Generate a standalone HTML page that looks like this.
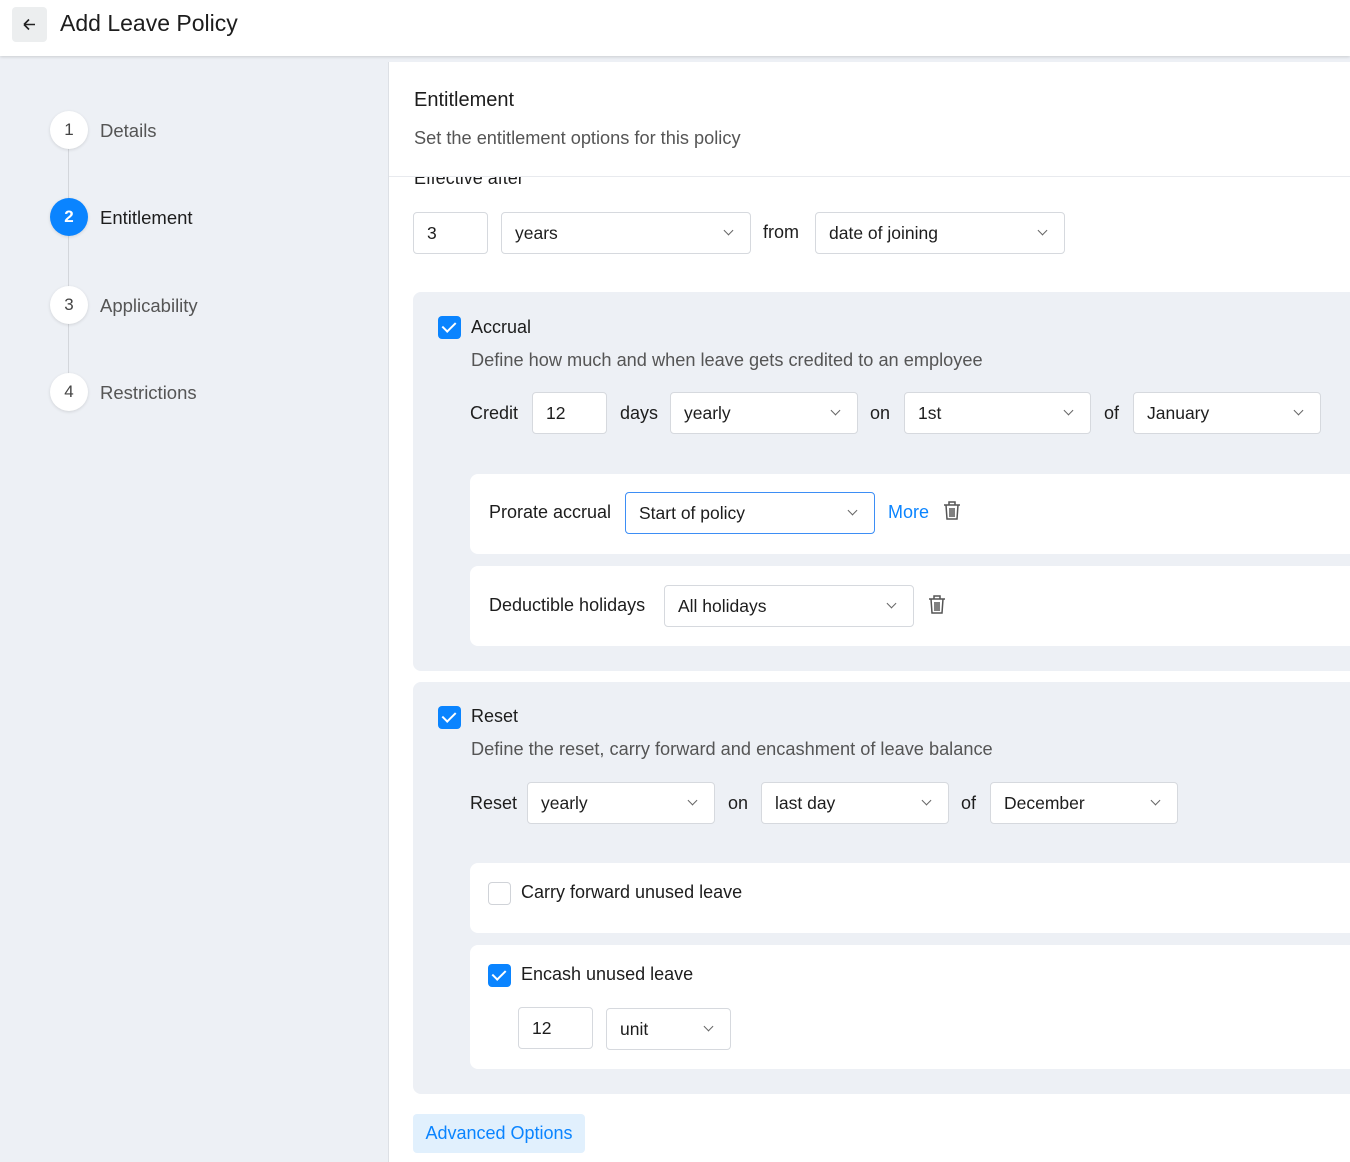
<!DOCTYPE html>
<html><head><meta charset="utf-8"><style>
*{box-sizing:border-box;margin:0;padding:0}
body{width:1350px;height:1162px;overflow:hidden;background:#edf0f5;font-family:"Liberation Sans",sans-serif;color:#1d1d1d;position:relative;font-size:17px}
.a{position:absolute}
.hdr{left:0;top:0;width:1350px;height:56px;background:#fff;box-shadow:0 1px 3px rgba(0,0,0,.15);z-index:3}
.back{left:12px;top:7px;width:35px;height:35px;background:#eceeef;border-radius:4px}
.main{left:388px;top:62px;width:962px;height:1100px;background:#fff;border-left:1px solid #dde0e5}
.step{width:38px;height:38px;border-radius:50%;background:#fff;box-shadow:0 1px 3px rgba(0,0,0,.12);text-align:center;line-height:38px;font-size:17px;color:#444}
.sl{font-size:18.5px;color:#555}
.box{background:#fff;border:1px solid #d6d9de;border-radius:4px;height:42px;line-height:40px;padding-left:13px;font-size:17.5px;color:#1d1d1d}
.chev{position:absolute;right:18px;top:14px;width:7px;height:7px;border-right:1.5px solid #666;border-bottom:1.5px solid #666;transform:rotate(45deg)}
.card{background:#edf0f5;border-radius:8px}
.wc{background:#fff;border-radius:8px}
.cb{width:23px;height:23px;border-radius:4px;background:#0a84ff}
.cb:after{content:"";position:absolute;left:7px;top:3px;width:6px;height:11px;border-right:2px solid #fff;border-bottom:2px solid #fff;transform:rotate(45deg)}
.lbl{font-size:18px;color:#1d1d1d}
.gray{color:#555;font-size:18.2px}
</style></head><body>
<div class="a hdr">
 <div class="a back"><svg width="35" height="35" viewBox="0 0 35 35"><path d="M12 17.5h11M12 17.5l5-5M12 17.5l5 5" stroke="#222" stroke-width="1.6" fill="none"/></svg></div>
 <div class="a" style="left:60px;top:10px;font-size:23px;color:#1d1d1d">Add Leave Policy</div>
</div>
<div class="a" style="left:68px;top:140px;width:1px;height:250px;background:#d3d6db"></div>
<div class="a step" style="left:50px;top:111px">1</div><div class="a sl" style="left:100px;top:120px">Details</div>
<div class="a step" style="left:50px;top:198px;background:#0a84ff;color:#fff;font-weight:bold">2</div><div class="a sl" style="left:100px;top:207px;color:#1d1d1d">Entitlement</div>
<div class="a step" style="left:50px;top:286px">3</div><div class="a sl" style="left:100px;top:295px">Applicability</div>
<div class="a step" style="left:50px;top:373px">4</div><div class="a sl" style="left:100px;top:382px">Restrictions</div>

<div class="a main"></div>
<div class="a" style="left:414px;top:89px;font-size:20px">Entitlement</div>
<div class="a gray" style="left:414px;top:128px">Set the entitlement options for this policy</div>
<div class="a" style="left:389px;top:176px;width:961px;height:1px;background:#e8eaee"></div>
<div class="a" style="left:414px;top:177px;height:11px;overflow:hidden;width:200px"><div style="margin-top:-9px;font-size:18px">Effective after</div></div>

<div class="a box" style="left:413px;top:212px;width:75px">3</div>
<div class="a box" style="left:501px;top:212px;width:250px">years<span class="chev"></span></div>
<div class="a lbl" style="left:763px;top:222px">from</div>
<div class="a box" style="left:815px;top:212px;width:250px">date of joining<span class="chev"></span></div>

<div class="a card" style="left:413px;top:292px;width:960px;height:379px"></div>
<div class="a cb" style="left:438px;top:316px"></div>
<div class="a lbl" style="left:471px;top:317px">Accrual</div>
<div class="a gray" style="left:471px;top:350px">Define how much and when leave gets credited to an employee</div>
<div class="a lbl" style="left:470px;top:403px">Credit</div>
<div class="a box" style="left:532px;top:392px;width:75px">12</div>
<div class="a lbl" style="left:620px;top:403px">days</div>
<div class="a box" style="left:670px;top:392px;width:188px">yearly<span class="chev"></span></div>
<div class="a lbl" style="left:870px;top:403px">on</div>
<div class="a box" style="left:904px;top:392px;width:187px">1st<span class="chev"></span></div>
<div class="a lbl" style="left:1104px;top:403px">of</div>
<div class="a box" style="left:1133px;top:392px;width:188px">January<span class="chev"></span></div>

<div class="a wc" style="left:470px;top:474px;width:900px;height:80px"></div>
<div class="a lbl" style="left:489px;top:502px">Prorate accrual</div>
<div class="a box" style="left:625px;top:492px;width:250px;border-color:#3d8ef5">Start of policy<span class="chev"></span></div>
<div class="a" style="left:888px;top:502px;font-size:18px;color:#0a84ff">More</div>
<svg class="a" style="left:942px;top:500px" width="20" height="22" viewBox="0 0 20 22"><path d="M2 5h16M7 5V2h6v3M4 5l1 14h10l1-14M8 8v9M12 8v9M10 8v9" stroke="#555" stroke-width="1.5" fill="none"/></svg>

<div class="a wc" style="left:470px;top:566px;width:900px;height:80px"></div>
<div class="a lbl" style="left:489px;top:595px">Deductible holidays</div>
<div class="a box" style="left:664px;top:585px;width:250px">All holidays<span class="chev"></span></div>
<svg class="a" style="left:927px;top:594px" width="20" height="22" viewBox="0 0 20 22"><path d="M2 5h16M7 5V2h6v3M4 5l1 14h10l1-14M8 8v9M12 8v9M10 8v9" stroke="#555" stroke-width="1.5" fill="none"/></svg>

<div class="a card" style="left:413px;top:682px;width:960px;height:412px"></div>
<div class="a cb" style="left:438px;top:706px"></div>
<div class="a lbl" style="left:471px;top:706px">Reset</div>
<div class="a gray" style="left:471px;top:739px">Define the reset, carry forward and encashment of leave balance</div>
<div class="a lbl" style="left:470px;top:793px">Reset</div>
<div class="a box" style="left:527px;top:782px;width:188px">yearly<span class="chev"></span></div>
<div class="a lbl" style="left:728px;top:793px">on</div>
<div class="a box" style="left:761px;top:782px;width:188px">last day<span class="chev"></span></div>
<div class="a lbl" style="left:961px;top:793px">of</div>
<div class="a box" style="left:990px;top:782px;width:188px">December<span class="chev"></span></div>

<div class="a wc" style="left:470px;top:863px;width:900px;height:70px"></div>
<div class="a" style="left:488px;top:882px;width:23px;height:23px;border:1.5px solid #d0d3d8;border-radius:4px;background:#fff"></div>
<div class="a lbl" style="left:521px;top:882px">Carry forward unused leave</div>

<div class="a wc" style="left:470px;top:945px;width:900px;height:124px"></div>
<div class="a cb" style="left:488px;top:964px"></div>
<div class="a lbl" style="left:521px;top:964px">Encash unused leave</div>
<div class="a box" style="left:518px;top:1007px;width:75px">12</div>
<div class="a box" style="left:606px;top:1008px;width:125px">unit<span class="chev"></span></div>

<div class="a" style="left:413px;top:1114px;width:172px;height:39px;background:#e1f0fd;border-radius:4px;color:#0a84ff;font-size:18px;line-height:39px;text-align:center">Advanced Options</div>
</body></html>
